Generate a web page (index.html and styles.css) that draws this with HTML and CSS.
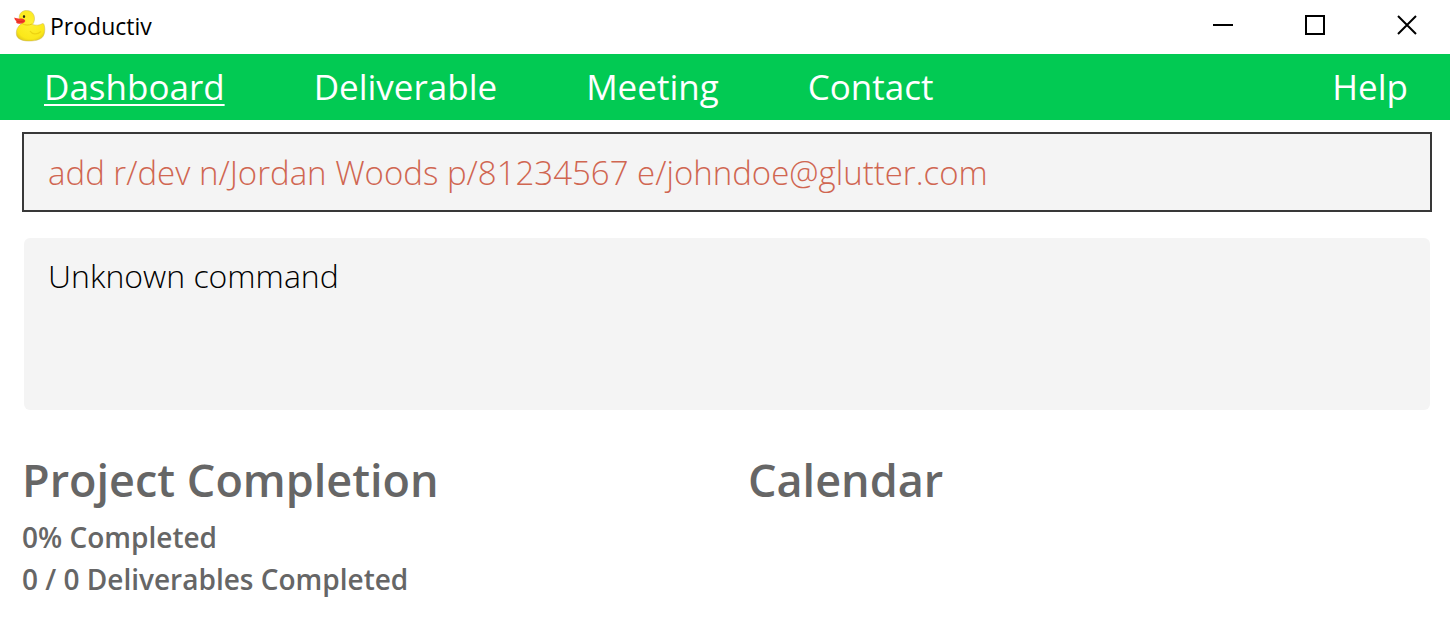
FILE: index.html
```html
<!DOCTYPE html>
<html lang="en">
<head>
<meta charset="utf-8">
<title>Productiv</title>
<link rel="stylesheet" href="styles.css">
</head>
<body>
<header class="titlebar">
  <svg class="logo" viewBox="0 0 32 32" aria-hidden="true">
    <defs>
      <radialGradient id="body" cx="0.5" cy="0.4" r="0.7">
        <stop offset="0" stop-color="#fff033"/>
        <stop offset="0.75" stop-color="#fbe81a"/>
        <stop offset="1" stop-color="#d8be18"/>
      </radialGradient>
    </defs>
    <path d="M4.500 16.500C2.500 19 2 22 2.500 25C3.500 29 8 31 15 31C23 31 28.500 29 30 24.500C31.200 21 31 17.500 30 14.500C29.500 13.200 28.500 13.300 27.500 14C25.500 15.300 22 15.500 18.500 14.500C20.500 12 21 8.500 20 5.500C18.800 2 16 0.500 12.500 0.500C8.500 0.500 5.500 3 5.200 7C5.100 10 6.500 12.500 8 13.500C6.500 14.200 5.300 15.300 4.500 16.500Z" fill="url(#body)" stroke="#c9b458" stroke-width="0.500"/>
    <path d="M16 21C18 24.500 23 25 27 21.500" fill="none" stroke="#eed312" stroke-width="1.200"/>
    <path d="M8 13.500C11 15.500 15 15.500 18 14" fill="none" stroke="#e6c90e" stroke-width="1"/>
    <path d="M0.300 7.500C2.500 8.200 5 9 7 8.500C9 8.300 11 9.500 11.300 11C10.500 13.300 7 14 5 13.700C2.800 13.500 1.500 12.800 2.500 11.300C1.300 10.500 0.300 9 0.300 7.500Z" fill="#f5382c"/>
    <path d="M2.500 11.300C5.500 11.800 8 11.600 10 11" fill="none" stroke="#c92a20" stroke-width="0.600"/>
    <ellipse cx="10" cy="6.500" rx="1.100" ry="1.500" fill="#2b2a10"/>
  </svg>
  <span class="app-name">Productiv</span>
  <div class="window-buttons">
    <button class="window-button" type="button" aria-label="Minimize"><svg viewBox="0 0 20 20"><path d="M0 10H20"/></svg></button>
    <button class="window-button" type="button" aria-label="Maximize"><svg viewBox="0 0 20 20"><path d="M1 1H19V19H1Z"/></svg></button>
    <button class="window-button" type="button" aria-label="Close"><svg viewBox="0 0 20 20"><path d="M1 1L19 19M19 1L1 19"/></svg></button>
  </div>
</header>
<nav class="menu">
  <a class="menu-link active" href="#dashboard" aria-current="page">Dashboard</a>
  <a class="menu-link" href="#deliverable">Deliverable</a>
  <a class="menu-link" href="#meeting">Meeting</a>
  <a class="menu-link" href="#contact">Contact</a>
  <a class="menu-link help" href="#help">Help</a>
</nav>
<main class="content">
  <input class="command" type="text" aria-label="Command" spellcheck="false" value="add r/dev n/Jordan Woods p/81234567 e/johndoe@glutter.com">
  <output class="result">Unknown command</output>
  <div class="panels">
    <section class="panel">
      <h1 class="heading">Project Completion</h1>
      <p class="stat">0% Completed</p>
      <p class="stat">0 / 0 Deliverables Completed</p>
    </section>
    <section class="panel">
      <h1 class="heading">Calendar</h1>
    </section>
  </div>
</main>
</body>
</html>
```
FILE: styles.css
```css
* { box-sizing: border-box; }

body {
  margin: 0;
  background: #fff;
  color: #666;
  font-family: "Open Sans", "Noto Sans", sans-serif;
}

.titlebar {
  display: flex;
  align-items: center;
  height: 54px;
  padding: 0 0 2px 14px;
}

.logo { width: 32px; height: 32px; }

.app-name {
  margin-left: 4px;
  color: #000;
  font-size: 23px;
  line-height: 32px;
}

.window-buttons {
  display: flex;
  align-self: flex-start;
  gap: 6px;
  margin-left: auto;
}

.window-button {
  display: grid;
  place-items: center;
  width: 86px;
  height: 50px;
  padding: 0;
  border: 0;
  background: none;
}

.window-button svg {
  width: 20px;
  height: 20px;
  fill: none;
  stroke: #000;
  stroke-width: 2px;
}

.menu {
  display: flex;
  align-items: center;
  gap: 89px;
  padding: 9px 42px 9px 44px;
  background: #02ca53;
}

.menu-link {
  color: #fff;
  font-size: 35px;
  font-weight: 400;
  line-height: 48px;
  text-decoration: none;
}

.menu-link.active {
  text-decoration: underline;
  text-decoration-thickness: 2px;
  text-underline-offset: 4px;
  text-decoration-skip-ink: none;
}

.help { margin-left: auto; }

.content {
  display: flex;
  flex-direction: column;
  padding: 12px 18px 0 22px;
}

.command {
  width: 100%;
  height: 80px;
  padding: 0 24px;
  border: 2px solid #383838;
  background: #f4f4f4;
  color: #d06651;
  font-family: inherit;
  font-size: 33px;
  font-weight: 300;
}

.result {
  display: block;
  min-height: 172px;
  margin: 26px 2px 0;
  padding: 14px 24px;
  border-radius: 6px;
  background: #f4f4f4;
  color: #000;
  font-size: 32px;
  font-weight: 300;
  line-height: 48px;
}

.panels {
  display: grid;
  grid-template-columns: 1fr 1fr;
  gap: 42px;
  margin-top: 38px;
}

.heading {
  margin: 0 0 4px;
  font-size: 45px;
  font-weight: 600;
  line-height: 64px;
}

.stat {
  margin: 0;
  font-size: 28px;
  font-weight: 600;
  line-height: 42px;
}
```
